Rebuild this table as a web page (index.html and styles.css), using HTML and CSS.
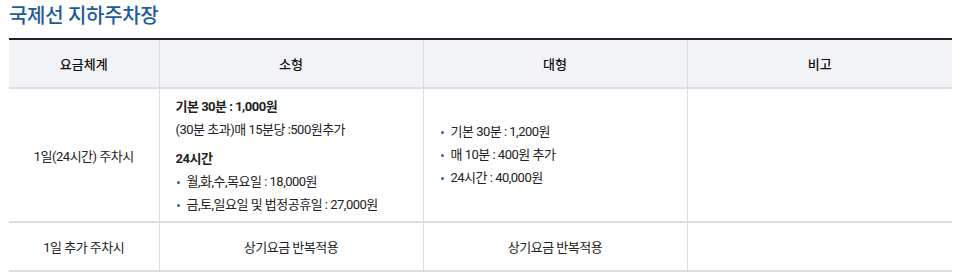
FILE: index.html
```html
<!DOCTYPE html>
<html lang="ko">
<head>
<meta charset="utf-8">
<link rel="stylesheet" href="styles.css">
</head>
<body>
<div class="wrap">
  <h2 class="title">국제선 지하주차장</h2>
  <table class="fee">
    <colgroup>
      <col class="c1"><col class="c2"><col class="c3"><col class="c4">
    </colgroup>
    <thead>
      <tr><th>요금체계</th><th>소형</th><th>대형</th><th>비고</th></tr>
    </thead>
    <tbody>
      <tr class="r-main">
        <td class="center">1일(24시간) 주차시</td>
        <td class="left">
          <p class="strong">기본 30분 : 1,000원</p>
          <p>(30분 초과)매 15분당 :500원추가</p>
          <p class="strong gap">24시간</p>
          <ul class="dots">
            <li>월,화,수,목요일 : 18,000원</li>
            <li>금,토,일요일 및 법정공휴일 : 27,000원</li>
          </ul>
        </td>
        <td class="left">
          <ul class="dots">
            <li>기본 30분 : 1,200원</li>
            <li>매 10분 : 400원 추가</li>
            <li>24시간 : 40,000원</li>
          </ul>
        </td>
        <td></td>
      </tr>
      <tr class="r-sub">
        <td class="center">1일 추가 주차시</td>
        <td class="center">상기요금 반복적용</td>
        <td class="center">상기요금 반복적용</td>
        <td></td>
      </tr>
    </tbody>
  </table>
</div>
</body>
</html>
```
FILE: styles.css
```css
html, body {
  margin: 0;
  padding: 0;
  background: #fff;
}
body {
  font-family: Roboto, "Noto Sans CJK KR", sans-serif;
  font-size: 13px;
  color: #222;
}
.wrap {
  padding: 0 8px 0 9px;
}
.title {
  margin: 0;
  padding-top: 3px;
  height: 35px;
  font-size: 20px;
  font-weight: 500;
  line-height: 26px;
  color: #1d5c9a;
  letter-spacing: -0.3px;
}
.fee {
  width: 100%;
  border-collapse: collapse;
  table-layout: fixed;
  border-top: 2px solid #222;
}
.c1 { width: 150px; }
.c2 { width: 264px; }
.c3 { width: 264px; }
.fee th {
  height: 47px;
  background: #f2f3f7;
  font-weight: 500;
  font-size: 13px;
  color: #111;
  border-left: 1px solid #dcdde1;
  border-bottom: 2px solid #dcdde1;
  padding: 0;
}
.fee th:first-child, .fee td:first-child { border-left: none; }
.fee td {
  border-left: 1px solid #dcdde1;
  border-bottom: 2px solid #dcdde1;
  padding: 0;
  vertical-align: middle;
  letter-spacing: -0.5px;
}
.r-main td { height: 132px; }
.r-sub td { height: 47px; }
.center { text-align: center; }
.left { padding-left: 16px !important; }
.left p {
  margin: 0;
  line-height: 23px;
}
.strong { font-weight: 700; }
.gap { margin-top: 6px !important; }
.dots {
  margin: 0;
  padding: 0;
  list-style: none;
}
.dots li {
  position: relative;
  padding-left: 11px;
  line-height: 23px;
}
.dots li::before {
  content: "";
  position: absolute;
  left: 1px;
  top: 11px;
  width: 3px;
  height: 3px;
  border-radius: 50%;
  background: #2f6aa8;
}
.r-main td:nth-child(3) .dots { margin-top: -2px; }
```
